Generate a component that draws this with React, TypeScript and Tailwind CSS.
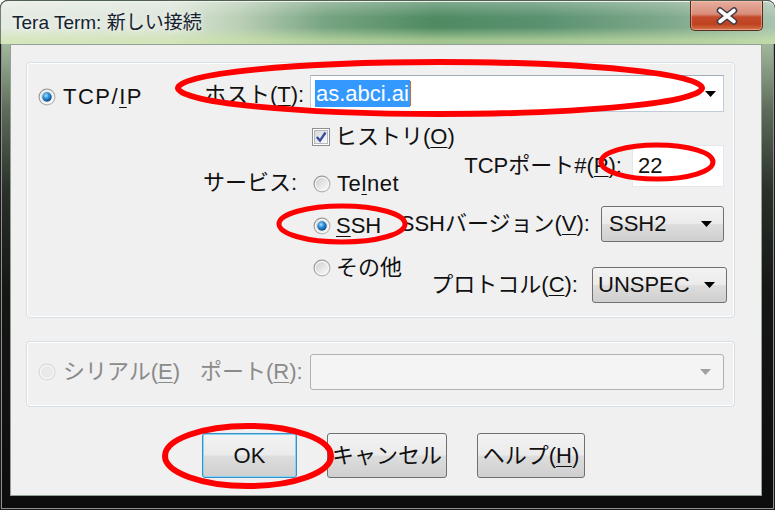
import React from "react"

const font = "font-['Liberation_Sans','Noto_Sans_CJK_JP',sans-serif]"

const Defs = () => (
  <svg width="0" height="0" className="absolute">
    <defs>
      <linearGradient id="radioRing" x1="0" y1="0" x2="1" y2="1">
        <stop offset="0" stopColor="#8c8c8c" />
        <stop offset="1" stopColor="#c2c2c2" />
      </linearGradient>
      <linearGradient id="radioFill" x1="0" y1="0" x2="1" y2="1">
        <stop offset="0" stopColor="#cfcfcf" />
        <stop offset="1" stopColor="#fbfbfb" />
      </linearGradient>
      <radialGradient id="radioDot" cx="0.4" cy="0.35" r="0.7">
        <stop offset="0" stopColor="#a6e4ff" />
        <stop offset="0.45" stopColor="#2a8fd9" />
        <stop offset="1" stopColor="#0a3b78" />
      </radialGradient>
      <linearGradient id="checkFill" x1="0" y1="0" x2="1" y2="1">
        <stop offset="0" stopColor="#d6d6d6" />
        <stop offset="1" stopColor="#fdfdfd" />
      </linearGradient>
    </defs>
  </svg>
)

const Radio = ({ on = false, off = false }: { on?: boolean; off?: boolean }) => (
  <svg width="18" height="18" viewBox="0 0 18 18" className="shrink-0">
    <circle cx="9" cy="9" r="8.5" fill={off ? "#d9d9d9" : "url(#radioRing)"} />
    <circle cx="9" cy="9" r="7.3" fill="#f7f7f7" />
    <circle cx="9" cy="9" r="6.1" fill={off ? "#e9e9e9" : "url(#radioFill)"} />
    {on && <circle cx="9" cy="9" r="4.7" fill="url(#radioDot)" />}
  </svg>
)

const Check = () => (
  <svg width="18" height="18" viewBox="0 0 18 18" className="shrink-0">
    <rect x="0.5" y="0.5" width="17" height="17" fill="#fff" stroke="#8e8f8f" />
    <rect x="2.5" y="2.5" width="13" height="13" fill="url(#checkFill)" stroke="#b4b8c0" />
    <path d="M4.8 9 L8 12.6 L13.5 4.5" fill="none" stroke="#3b4d9e" strokeWidth="2.4" />
  </svg>
)

const Arrow = ({ color = "#000" }: { color?: string }) => (
  <svg width="11" height="6" viewBox="0 0 11 6" className="shrink-0">
    <path d="M0 0H11L5.5 6Z" fill={color} />
  </svg>
)

const U = ({ children }: { children: React.ReactNode }) => (
  <span className="underline decoration-1 underline-offset-[3px]">{children}</span>
)

const btnBg =
  "bg-[linear-gradient(to_bottom,#f3f3f3_0%,#ebebeb_48%,#dddddd_52%,#cfcfcf_100%)]"

export default function App() {
  return (
    <div
      className={`relative h-[510px] w-[775px] overflow-hidden rounded-t-[8px] bg-[linear-gradient(to_bottom,#bcd0b4_0px,#9bb296_50px,#5d6c5a_110px,#2a302a_190px,#151715_290px,#0c0c0c_100%)] shadow-[inset_0_0_0_1px_#1a1a1a,inset_0_0_0_2px_#8f8f8f] ${font} text-[22px] leading-none text-[#111]`}
    >
      <Defs />

      {/* title bar */}
      <div className="flex h-[44px] items-start justify-between rounded-t-[8px] bg-[linear-gradient(to_bottom,rgba(255,255,255,0.3)_0%,rgba(255,255,255,0)_40%,rgba(205,230,165,0)_62%,rgba(205,228,168,0.65)_92%),linear-gradient(to_right,#e4ebe2_0%,#dde6da_22%,#b9ceb5_31%,#77a482_42%,#4f8a62_56%,#5a9170_70%,#7ea88b_86%,#a9c4ae_100%)] shadow-[inset_0_1px_0_#4f5f52,inset_1px_0_0_#6f7f70,inset_0_2px_0_#eef3ec]">
        <div className="mt-[11px] ml-[12px] text-[19px] leading-[24px] text-[#15212e] [text-shadow:0_0_6px_rgba(255,255,255,0.9)]">
          Tera Term: 新しい接続
        </div>
        <div className="mt-[1px] mr-[12px] flex h-[30px] w-[73px] items-center justify-center rounded-b-[5px] border border-t-0 border-[#5b2a1f] bg-[linear-gradient(to_bottom,#e7ad9d_0%,#d88e7a_45%,#c44b2d_55%,#bf421f_80%,#d4744c_100%)] shadow-[inset_0_0_0_1px_rgba(255,210,190,0.45)]">
          <svg width="22" height="18" viewBox="0 0 22 18">
            <path d="M4 3.5 L18 14.5 M18 3.5 L4 14.5" stroke="#3a3a48" strokeWidth="6.5" strokeLinecap="round" />
            <path d="M4 3.5 L18 14.5 M18 3.5 L4 14.5" stroke="#fff" strokeWidth="3.6" strokeLinecap="round" />
          </svg>
        </div>
      </div>

      {/* client area */}
      <div className="ml-[10px] h-[452px] w-[752px] border border-[#93a093] bg-[#f0f0f0] pt-[17px] pl-[15px]">
        {/* TCP/IP group */}
        <div className="h-[256px] w-[709px] rounded-[4px] border border-[#d5dfe5] shadow-[inset_0_0_0_1px_#ffffff]">
          <div className="mt-[12px] flex h-[37px] items-center">
            <div className="ml-[11px] flex w-[166px] items-center gap-[7px] pt-[6px]">
              <Radio on />
              <span className="tracking-[1.5px]">
                TCP/<U>I</U>P
              </span>
            </div>
            <div className="w-[106px] pt-[3px]">
              ホスト(<U>T</U>):
            </div>
            <div className="flex h-[37px] w-[414px] items-center border border-[#bfcbd8] border-t-[#a3acb7] bg-white pl-[4px]">
              <span className="flex h-[27px] items-center bg-[#3399ff] px-[1px] text-white">as.abci.ai</span>
              <span className="h-[25px] w-[1px] bg-[#d07030]" />
              <span className="mr-[7px] ml-auto">
                <Arrow />
              </span>
            </div>
          </div>

          <div className="flex">
            {/* service label */}
            <div className="w-[285px] pl-[176px]">
              <div className="mt-[59px] flex h-[24px] items-center whitespace-nowrap">サービス:</div>
            </div>

            {/* options */}
            <div className="flex w-[92px] flex-col whitespace-nowrap">
              <div className="mt-[13px] flex h-[24px] items-center gap-[5px]">
                <Check />
                <span>
                  ヒストリ(<U>O</U>)
                </span>
              </div>
              <div className="mt-[23px] flex h-[24px] items-center gap-[6px] pl-[1px]">
                <Radio />
                <span className="tracking-[0.6px]">
                  Te<U>l</U>net
                </span>
              </div>
              <div className="mt-[18px] flex h-[24px] items-center gap-[5px] pl-[1px]">
                <Radio on />
                <span>
                  <U>S</U>SH
                </span>
              </div>
              <div className="mt-[18px] flex h-[24px] items-center gap-[5px] pl-[1px]">
                <Radio />
                <span>その他</span>
              </div>
            </div>

            {/* right column */}
            <div className="flex w-[323px] flex-col items-end whitespace-nowrap">
              <div className="mt-[33px] mr-[3px] flex h-[42px] items-center gap-[10px]">
                <span>
                  TCPポート#(<U>P</U>):
                </span>
                <div className="flex h-[42px] w-[92px] items-center border border-[#e2e8ee] bg-white pl-[5px]">22</div>
              </div>
              <div className="mt-[19px] mr-[3px] flex h-[36px] items-center gap-[11px]">
                <span>
                  SSHバージョン(<U>V</U>):
                </span>
                <div
                  className={`flex h-[36px] w-[123px] items-center justify-between rounded-[3px] border border-[#707070] pr-[11px] pl-[7px] ${btnBg}`}
                >
                  <span>SSH2</span>
                  <Arrow />
                </div>
              </div>
              <div className="mt-[25px] flex h-[36px] items-center gap-[14px]">
                <span>
                  プロトコル(<U>C</U>):
                </span>
                <div
                  className={`flex h-[36px] w-[135px] items-center justify-between rounded-[3px] border border-[#707070] pr-[11px] pl-[5px] ${btnBg}`}
                >
                  <span>UNSPEC</span>
                  <Arrow />
                </div>
              </div>
            </div>
          </div>
        </div>

        {/* serial group */}
        <div className="mt-[23px] flex h-[66px] w-[709px] items-center rounded-[4px] border border-[#d5dfe5] pb-[4px] text-[#8a8a8a] shadow-[inset_0_0_0_1px_#ffffff]">
          <div className="ml-[11px] flex w-[162px] items-center gap-[7px]">
            <Radio off />
            <span>
              シリアル(<U>E</U>)
            </span>
          </div>
          <div className="w-[110px]">
            ポート(<U>R</U>):
          </div>
          <div className="flex h-[36px] w-[414px] items-center justify-end rounded-[3px] border border-[#adb2b5] bg-[#f4f4f4] pr-[12px]">
            <Arrow color="#a0a0a0" />
          </div>
        </div>

        {/* buttons */}
        <div className="mt-[26px] ml-[176px] flex gap-[30px]">
          <div
            className={`flex h-[45px] w-[95px] items-center justify-center rounded-[3px] border border-[#3c8fc8] shadow-[inset_0_0_0_1px_#86d4f4] ${btnBg}`}
          >
            OK
          </div>
          <div
            className={`flex h-[45px] w-[120px] items-center justify-center rounded-[3px] border border-[#707070] ${btnBg}`}
          >
            キャンセル
          </div>
          <div
            className={`flex h-[45px] w-[108px] items-center justify-center rounded-[3px] border border-[#707070] ${btnBg}`}
          >
            ヘルプ(<U>H</U>)
          </div>
        </div>
      </div>

      {/* red annotation marks */}
      <svg className="pointer-events-none absolute inset-0" width="775" height="510" viewBox="0 0 775 510">
        <g fill="none" stroke="#ff0000">
          <ellipse cx="440" cy="88" rx="262" ry="26" strokeWidth="6" />
          <ellipse cx="657" cy="162" rx="56" ry="17" strokeWidth="5" />
          <ellipse cx="342" cy="224" rx="63" ry="18" strokeWidth="5" />
          <ellipse cx="248" cy="456" rx="83" ry="30" strokeWidth="6" />
        </g>
      </svg>
    </div>
  )
}
